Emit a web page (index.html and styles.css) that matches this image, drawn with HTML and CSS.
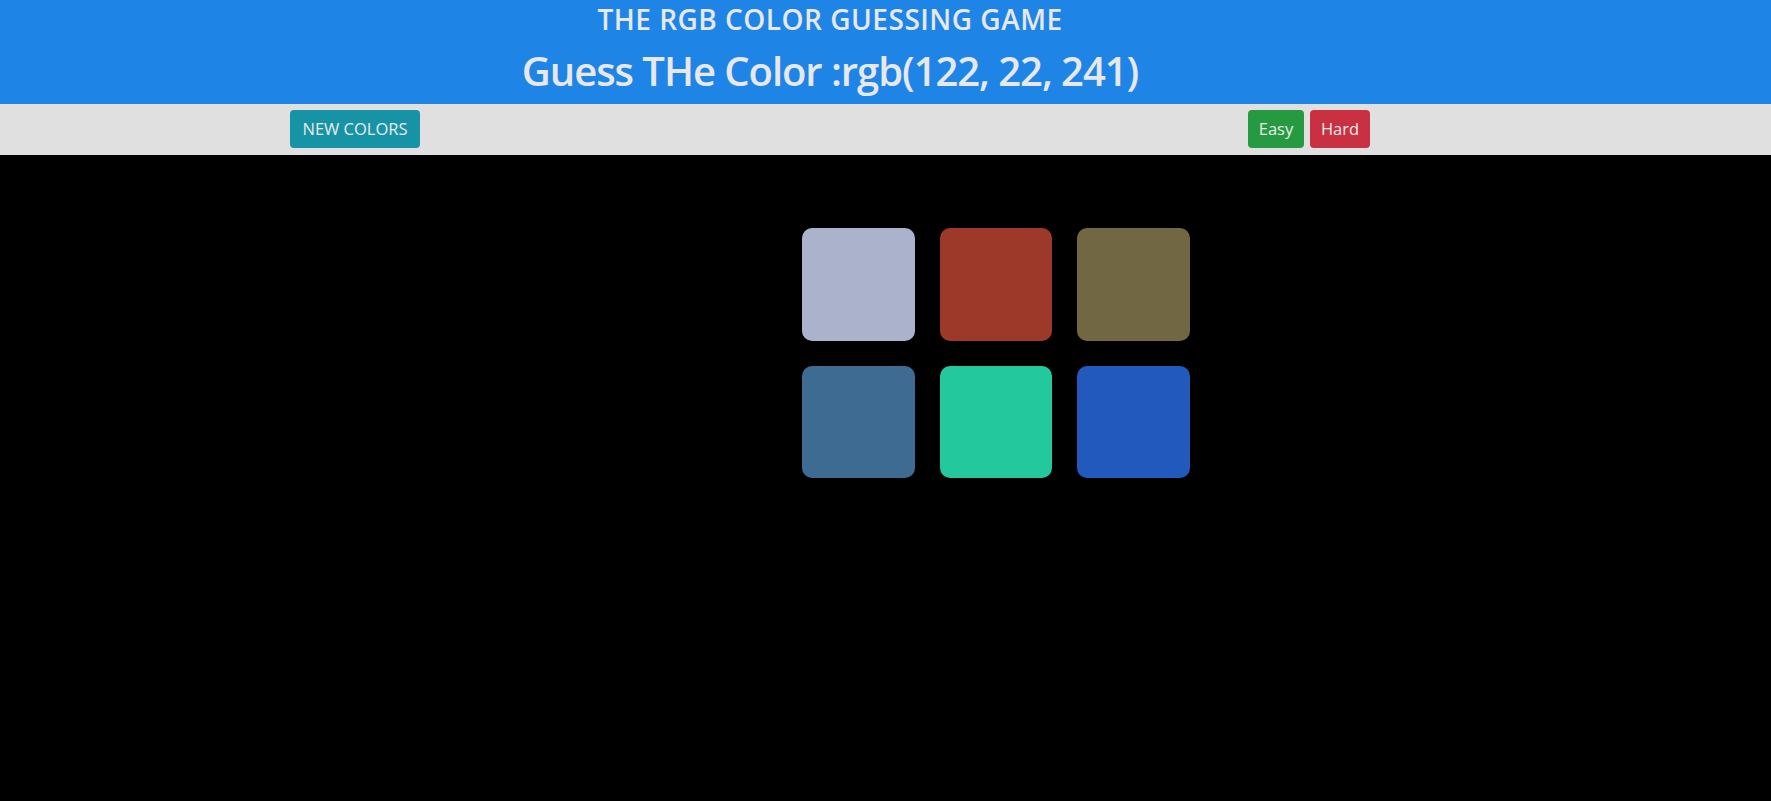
FILE: index.html
```html
<!DOCTYPE html>
<html lang="en">
<head>
<meta charset="utf-8">
<title>RGB Color Guessing Game</title>
<link rel="stylesheet" href="styles.css">
</head>
<body>
<header class="header">
  <div class="header-inner">
    <h3 class="title">THE RGB COLOR GUESSING GAME</h3>
    <h1 class="target">Guess THe Color :<span class="rgb">rgb(122, 22, 241)</span></h1>
  </div>
</header>
<nav class="bar">
  <div class="bar-inner">
    <button class="btn btn-info">NEW COLORS</button>
    <div class="modes">
      <button class="btn btn-success">Easy</button>
      <button class="btn btn-danger">Hard</button>
    </div>
  </div>
</nav>
<main class="board">
  <div class="grid">
    <div class="square" style="background:#abb3cc"></div>
    <div class="square" style="background:#9c3928"></div>
    <div class="square" style="background:#716843"></div>
    <div class="square" style="background:#3d6b91"></div>
    <div class="square" style="background:#23c99d"></div>
    <div class="square" style="background:#2259bc"></div>
  </div>
</main>
</body>
</html>
```

FILE: styles.css
```css
* { box-sizing: border-box; }
html, body {
  margin: 0;
  padding: 0;
  background: #000;
  height: 100%;
}
body {
  font-family: "Open Sans", "Noto Sans", sans-serif;
  color: #e6e6e6;
}
.header {
  background: #1e84e6;
  height: 104px;
}
.header-inner {
  width: 1660px;
  text-align: center;
  padding-top: 2px;
}
.title {
  margin: 0;
  font-size: 28px;
  font-weight: 600;
  line-height: 34px;
  letter-spacing: 0.5px;
  color: #e8e8ea;
}
.target {
  margin: 11px 0 0;
  font-size: 40px;
  font-weight: 600;
  line-height: 48px;
  letter-spacing: -1.05px;
  color: #e8e8ea;
}
.bar {
  background: #e0e0e0;
  height: 51px;
  padding-top: 6px;
}
.bar-inner {
  margin-left: 290px;
  width: 1080px;
  display: flex;
  justify-content: space-between;
  align-items: flex-start;
}
.modes {
  display: flex;
  gap: 6px;
}
.btn {
  font-family: "Open Sans", "Noto Sans", sans-serif;
  font-size: 16.5px;
  line-height: 24px;
  height: 38px;
  padding: 6px 0;
  border: 1px solid transparent;
  border-radius: 4px;
  color: #ececec;
  cursor: pointer;
  text-align: center;
}
.btn-info { background: #1793a6; width: 130px; }
.btn-success { background: #269a40; width: 56px; }
.btn-danger { background: #c93041; width: 60px; }
.board {
  padding-top: 73px;
}
.grid {
  margin-left: 802px;
  display: grid;
  grid-template-columns: repeat(3, 112.5px);
  grid-auto-rows: 112.5px;
  column-gap: 25px;
  row-gap: 25px;
}
.square {
  border-radius: 10px;
}
```
